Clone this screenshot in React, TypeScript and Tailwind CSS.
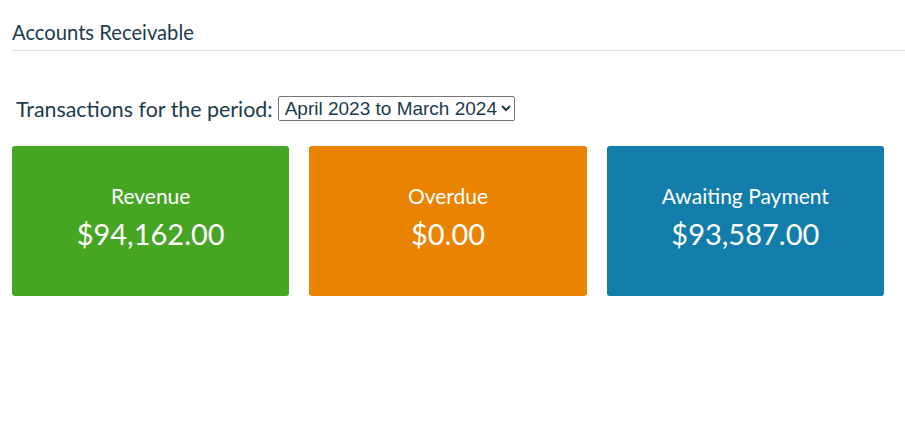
const cards = [
  { label: "Revenue", amount: "$94,162.00", color: "bg-[#47a524]" },
  { label: "Overdue", amount: "$0.00", color: "bg-[#e98300]" },
  { label: "Awaiting Payment", amount: "$93,587.00", color: "bg-[#127dab]" },
];

const App = () => {
  return (
    <div className="min-h-[435px] bg-white font-['Lato',sans-serif] text-[#1c3b4c]">
      <div className="ml-3 border-b border-[#dcdfe2] pt-[21px] pb-[7px]">
        <h2 className="text-[20.2px] leading-[22px]">Accounts Receivable</h2>
      </div>
      <div className="mt-[45px] flex items-center gap-[5px] pl-4">
        <span className="text-[21.4px] leading-[24px]">Transactions for the period:</span>
        <select
          defaultValue="2023"
          className="h-[25px] rounded-[2px] border border-[#767676] bg-white pl-[2px] font-['Liberation_Sans',Arial,sans-serif] text-[19px] leading-[22px] text-[#1c3b4c]"
        >
          <option value="2023">April 2023 to March 2024</option>
          <option value="2022">April 2022 to March 2023</option>
        </select>
      </div>
      <div className="mt-[25px] grid grid-cols-3 gap-5 pl-3 pr-[21px]">
        {cards.map((card) => (
          <div
            key={card.label}
            className={`flex h-[150px] flex-col items-center rounded-[3px] pt-[38px] text-white ${card.color}`}
          >
            <p className="text-[21px] leading-[24px]">{card.label}</p>
            <p className="mt-[8px] text-[29px] leading-[36px]">{card.amount}</p>
          </div>
        ))}
      </div>
    </div>
  );
};

export default App;
